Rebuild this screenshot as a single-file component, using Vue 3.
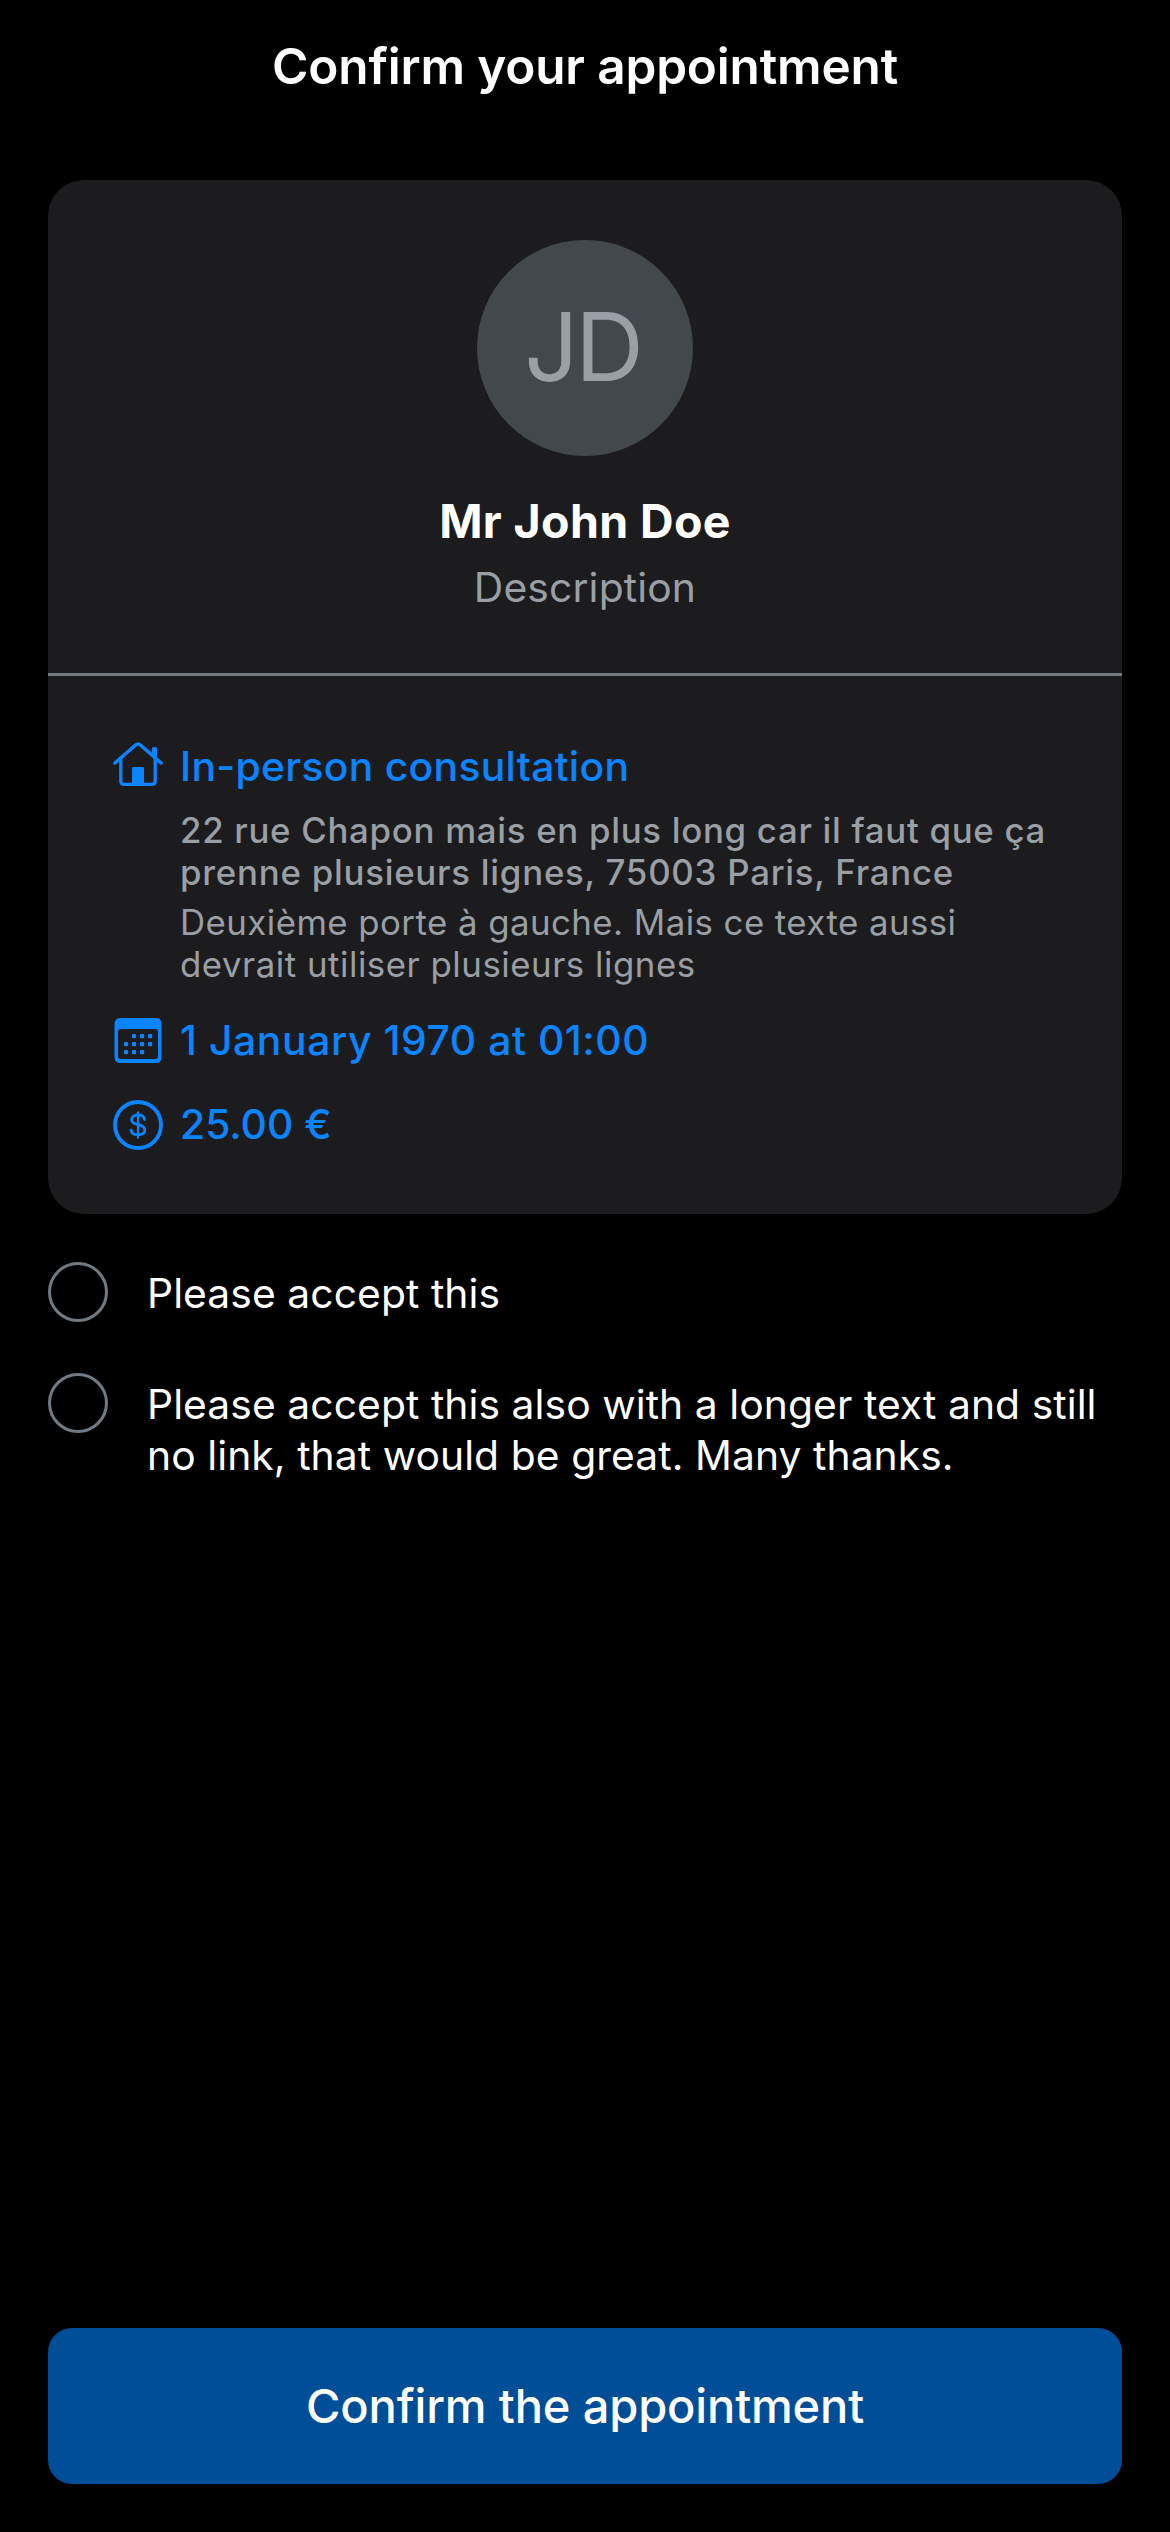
<script setup>
const consents = [
  ['Please accept this'],
  ['Please accept this also with a longer text and still', 'no link, that would be great. Many thanks.'],
]
const dots = [
  [20, 18], [28, 18], [36, 18],
  [12, 26], [20, 26], [28, 26], [36, 26],
  [12, 34], [20, 34], [28, 34],
]
</script>

<template>
  <div class="screen">
    <header class="header"><h1>Confirm your appointment</h1></header>

    <main class="content">
      <section class="card">
        <div class="profile">
          <div class="avatar"><span>JD</span></div>
          <h2>Mr John Doe</h2>
          <p class="description">Description</p>
        </div>

        <div class="details">
          <div class="row">
            <svg class="icon" viewBox="0 0 50 50" fill="none" stroke="currentColor" stroke-linecap="round" stroke-linejoin="round">
              <path d="M1.9 22 L22.6 4 Q25 1.9 27.4 4 L48.1 22" stroke-width="3.5" />
              <path d="M7.8 17.5 V40 Q7.8 43.3 11 43.3 H39 Q42.2 43.3 42.2 40 V17.5" stroke-width="3.3" />
              <path d="M39 13.5 V7.6 Q39 6 40.6 6 H42.4 Q44 6 44 7.6 V18 Z" fill="currentColor" stroke="none" />
              <path d="M19 42.5 V27.3 Q19 26 20.3 26 H29.7 Q31 26 31 27.3 V42.5 Z" fill="currentColor" stroke="none" />
            </svg>
            <span class="label person">In-person consultation</span>
          </div>

          <div class="place">
            <p class="address"><span>22 rue Chapon mais en plus long car il faut que ça</span><span class="city">prenne plusieurs lignes, 75003 Paris, France</span></p>
            <p class="hint"><span>Deuxième porte à gauche. Mais ce texte aussi</span><span class="more">devrait utiliser plusieurs lignes</span></p>
          </div>

          <div class="row date-row">
            <svg class="icon" viewBox="0 0 50 50">
              <path fill="currentColor" fill-rule="evenodd" d="M7.5 3 H42.5 Q48.5 3 48.5 9 V42 Q48.5 48 42.5 48 H7.5 Q1.5 48 1.5 42 V9 Q1.5 3 7.5 3 Z M8 14 Q5 14 5 17 V41 Q5 44 8 44 H42 Q45 44 45 41 V17 Q45 14 42 14 Z" />
              <rect v-for="[x, y] in dots" :key="`${x}-${y}`" :x="x - 1" :y="y + 1" width="4.2" height="4.2" rx="1.2" fill="currentColor" />
            </svg>
            <span class="label date">1 January 1970 at 01:00</span>
          </div>

          <div class="row price-row">
            <svg class="icon" viewBox="0 -1 50 50" fill="none" stroke="currentColor" stroke-linecap="round">
              <circle cx="25" cy="25" r="23" stroke-width="3.9" />
              <path d="M25 12.3 V37.7" stroke-width="2.2" />
              <path d="M31.6 19.6 C31.2 16.6 28.6 15 25 15 C21.2 15 18.6 16.9 18.6 19.7 C18.6 22.5 20.5 23.6 25 24.7 C29.7 25.8 31.8 27.2 31.8 30.1 C31.8 33.1 29.1 34.9 25 34.9 C21.1 34.9 18.4 33.2 18.1 30.2" stroke-width="2.8" />
            </svg>
            <span class="label">25.00 €</span>
          </div>
        </div>
      </section>

      <ul class="consents">
        <li v-for="(lines, i) in consents" :key="i">
          <span class="radio"></span>
          <p><span v-for="line in lines" :key="line">{{ line }}</span></p>
        </li>
      </ul>
    </main>

    <button class="confirm" type="button">Confirm the appointment</button>
  </div>
</template>

<style>
body { background: #000; }
</style>

<style scoped>
.screen {
  display: flex;
  flex-direction: column;
  box-sizing: border-box;
  width: 1170px;
  height: 2532px;
  padding: 0 48px 48px;
  background: #000;
  color: #fff;
  font-family: Inter, "Liberation Sans", sans-serif;
}
h1, h2, p, ul { margin: 0; padding: 0; }
.header {
  display: flex;
  align-items: center;
  justify-content: center;
  height: 132px;
}
h1 {
  font-size: 49.5px;
  font-weight: 600;
  line-height: 60px;
  letter-spacing: -0.17px;
}
.card {
  margin-top: 48px;
  border-radius: 36px;
  background: #1c1c1e;
}
.profile {
  display: flex;
  flex-direction: column;
  align-items: center;
  padding: 60px 0 61px;
  border-bottom: 3px solid #6f7a83;
}
.avatar {
  display: flex;
  align-items: center;
  justify-content: center;
  width: 216px;
  height: 216px;
  border-radius: 50%;
  background: #43484c;
  color: #999fa4;
  font-size: 95px;
  letter-spacing: -3.2px;
}
.avatar span { padding: 0 5px 3px 0; }
h2 {
  margin-top: 37px;
  font-size: 46.5px;
  font-weight: 700;
  line-height: 56px;
  letter-spacing: 0.37px;
}
.description {
  margin-top: 13px;
  color: #999fa4;
  font-size: 40.8px;
  line-height: 50px;
  letter-spacing: 0.14px;
}
.details { padding: 65px 0 65px 65px; }
.row {
  display: flex;
  align-items: center;
  gap: 17px;
  height: 50px;
  color: #0a84ff;
}
.icon { width: 50px; height: 50px; overflow: visible; }
.label {
  font-size: 40.8px;
  font-weight: 500;
  line-height: 50px;
  white-space: nowrap;
}
.person { letter-spacing: 0.32px; }
.date { letter-spacing: 0.6px; }
.place {
  margin: 18px 0 0 67px;
  color: #999fa4;
  font-size: 34.8px;
  line-height: 42px;
  white-space: nowrap;
}
.place span { display: block; }
.address { font-weight: 500; letter-spacing: 0.71px; }
.city { letter-spacing: 0.76px; }
.hint { margin-top: 8px; letter-spacing: 0.45px; }
.more { letter-spacing: 0.53px; }
.date-row { margin-top: 30px; }
.price-row { margin-top: 34px; }
.consents {
  display: flex;
  flex-direction: column;
  gap: 51px;
  margin-top: 48px;
  list-style: none;
}
li { display: flex; gap: 39px; height: 60px; }
.radio {
  box-sizing: border-box;
  flex: none;
  width: 60px;
  height: 60px;
  border: 3px solid #6f7a83;
  border-radius: 50%;
}
li p {
  padding-top: 6px;
  font-size: 40.8px;
  line-height: 51px;
  letter-spacing: 0.07px;
  white-space: nowrap;
}
li p span { display: block; }
.confirm {
  display: flex;
  align-items: center;
  justify-content: center;
  height: 156px;
  margin: auto 0 0;
  padding: 0 0 2px;
  border: 0;
  border-radius: 24px;
  background: #004e98;
  color: #fff;
  font-family: inherit;
  font-size: 47px;
  font-weight: 500;
  letter-spacing: -0.14px;
}
</style>
